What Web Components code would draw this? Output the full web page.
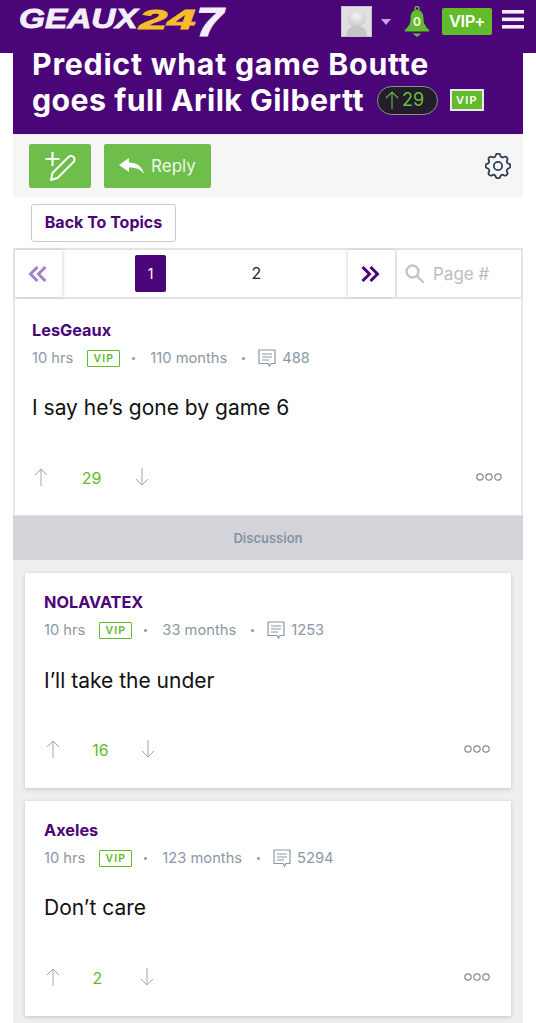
<!DOCTYPE html>
<html><head><meta charset="utf-8">
<style>
html,body{margin:0;padding:0;background:#fff;font-family:Inter,"Liberation Sans",sans-serif;overflow:hidden;height:1023px}
geaux-header{position:relative;z-index:2}
</style></head><body>
<template id="t-header"><style>
:host{display:flex;height:53px;background:#4a0578;box-sizing:border-box;padding:6px 12px 0 19px}
.logo{font:italic 700 28px/1 "Liberation Sans",sans-serif;color:#f3eefa;display:flex;height:32px;-webkit-text-stroke:.9px currentColor;width:206px;flex:none}
.logo span{display:block;transform-origin:0 50%;white-space:nowrap}
.g{width:120px;transform:scaleX(1.19);margin-top:-1px}
.n{width:57px;color:#f5bd2c;transform:scaleX(1.82);margin-top:0}
.s{font-size:41px;transform:scaleX(1.2);margin-top:-4px}
.sp{flex:1}
.r{display:flex;align-items:flex-start}
.tri{width:0;height:0;border:5.500px solid transparent;border-top:6.500px solid #c9a4e2;border-bottom:0;margin:13px 13px 0 9px}
.vip{width:50px;height:27px;background:#62bb2a;border-radius:2px;color:#fff;font:600 16.500px/27px Inter,sans-serif;letter-spacing:-.5px;text-align:center;margin:2px 10px 0 12px}
svg{display:block}
</style>
<div class="logo"><span class="g">GEAUX</span><span class="n">24</span><span class="s">7</span></div><div class="sp"></div>
<div class="r">
<svg width="31" height="31" viewBox="0 0 31 31"><defs><radialGradient id="a" cx=".5" cy=".35" r=".7"><stop offset="0" stop-color="#f4f4f4"/><stop offset="1" stop-color="#c4c4c4"/></radialGradient></defs><rect width="31" height="31" fill="#c9bdd6"/><rect x="1" y="1" width="29" height="29" fill="#e0e0e0"/><circle cx="15.500" cy="12.500" r="9" fill="url(#a)"/><path d="M5 30c0-8 5-10 10.500-10S26 22 26 30z" fill="#c6c6c6"/></svg>
<div class="tri"></div>
<svg width="26" height="32" viewBox="0 0 26 32"><circle cx="13" cy="2.500" r="2" fill="none" stroke="#6dbe30" stroke-width="1.300"/><path d="M13 4c-5 0-6.500 4-6.500 9 0 5-2.500 8-6 11.500 0 .7.500 1 1.200 1h22.600c.7 0 1.200-.3 1.200-1-3.500-3.500-6-6.500-6-11.500 0-5-1.500-9-6.500-9z" fill="#62bb2a"/><path d="M8.500 27.500h9L13 31z" fill="#62bb2a"/><text x="13" y="20" text-anchor="middle" font-family="Inter" font-weight="600" font-size="12" fill="#fff">0</text></svg>
<div class="vip">VIP+</div>
<svg width="22" height="20" viewBox="0 0 22 20" style="margin-top:4px"><rect y="0" width="22" height="3.600" fill="#f6eefb"/><rect y="7.500" width="22" height="3.600" fill="#f6eefb"/><rect y="15" width="22" height="3.600" fill="#f6eefb"/></svg>
</div></template>

<template id="t-title"><style>
:host{display:flow-root;margin:0 13px;height:82px;background:#4a0578;color:#fff;box-sizing:border-box;border-bottom:1px solid #f4e6fb}
.l{font:700 30.300px/36px Inter,sans-serif;letter-spacing:.75px;padding-left:19px;white-space:nowrap;margin-top:-7px}
.row{display:flex;align-items:center;letter-spacing:.45px}
.pill{display:inline-flex;align-items:center;gap:3px;box-sizing:border-box;width:61px;height:29px;border:1.500px solid #7f9e6a;border-radius:15px;background:#231c2d;color:#6dbe30;font:400 18px/1 Inter,sans-serif;letter-spacing:0;margin-left:13px;padding-left:7px}
.v{width:34px;height:22px;box-sizing:border-box;border:2px solid #e8e8e8;background:#62bb2a;color:#fff;font:600 11px/18px Inter,sans-serif;letter-spacing:1.200px;text-align:center;margin-left:12px}
</style>
<div class="l">Predict what game Boutte</div>
<div class="l row" style="margin-top:0"><span>goes full Arilk Gilbertt</span><span class="pill"><svg width="14" height="20" viewBox="0 0 14 20"><path d="M7 19V2M1 8l6-6 6 6" fill="none" stroke="#6dbe30" stroke-width="1.100"/></svg>29</span><span class="v">VIP</span></div>
</template>

<template id="t-toolbar"><style>
:host{display:flex;margin:0 13px;height:62px;background:#f6f6f7;box-sizing:border-box;padding:9px 12px 0 16px}
.b{height:44px;background:#6fbe4b;border-radius:2px;display:flex;align-items:center;justify-content:center;color:#eef8e8;font:400 17px/1 Inter,sans-serif;gap:7px;box-sizing:border-box}
.sp{flex:1}svg{display:block}
</style>
<div class="b" style="width:62px;margin-right:13px"><svg width="34" height="34" viewBox="0 0 34 34" fill="none" stroke="#fff"><path d="M9.500 3v14M2.500 10h14" stroke-width="2.200"/><path d="M8 31l1.500-7L25.500 8c1.500-1.500 3.500-1.500 5 0s1.500 3.500 0 5L14.500 29z" stroke-width="2" stroke-linejoin="round"/></svg></div>
<div class="b" style="width:107px"><svg width="25" height="16" viewBox="0 0 25 16"><path d="M0 7L10 0v4.500c8 0 13 4 15 11.500-3-4.500-8-6.500-15-6.500V14z" fill="#fff"/></svg><span>Reply</span></div>
<div class="sp"></div>
<svg style="margin-top:9px" width="26" height="26" viewBox="2.500 2.500 19 19" fill="none" stroke="#2c3e50" stroke-width="1.300" stroke-linecap="round" stroke-linejoin="round"><circle cx="12" cy="12" r="3"/><path d="M10.300 4.300c.4-1.800 3-1.800 3.400 0a1.700 1.700 0 0 0 2.600 1.100c1.500-.9 3.300.8 2.400 2.400a1.700 1.700 0 0 0 1 2.500c1.800.4 1.800 3 0 3.400a1.700 1.700 0 0 0-1 2.600c.9 1.500-.9 3.300-2.400 2.400a1.700 1.700 0 0 0-2.600 1c-.4 1.800-3 1.800-3.400 0a1.700 1.700 0 0 0-2.600-1c-1.500.9-3.300-.9-2.400-2.400a1.700 1.700 0 0 0-1-2.600c-1.800-.4-1.800-3 0-3.400a1.700 1.700 0 0 0 1-2.500c-.9-1.600.9-3.300 2.400-2.400 1 .6 2.300.1 2.600-1.100z"/></svg>
</template>

<template id="t-back"><style>
:host{display:block;margin:0 13px;height:51px;box-sizing:border-box;padding:7px 0 0 18px}
a{display:block;width:145px;height:38px;box-sizing:border-box;border:1.500px solid #c9ccd3;border-radius:3px;color:#4a0578;font:700 16px/35px Inter,sans-serif;text-align:center}
</style><a>Back To Topics</a></template>

<template id="t-pager"><style>
:host{display:flex;margin:0 13px;height:51px;box-sizing:border-box;border:2px solid #e4e4e4;background:#fff;align-items:stretch}
.c{display:flex;align-items:center;justify-content:center;box-sizing:border-box}
.e{width:47px;box-shadow:1px 0 3px rgba(0,0,0,.15);z-index:1}
.pg{flex:1;position:relative}
.n{position:absolute;top:5px;width:31px;height:37px;text-align:center;font:400 16px/37px Inter,sans-serif;color:#222}
.cur{background:#4a0578;color:#fff;border-radius:2px;font-size:14px}
.s{width:126px;border-left:2px solid #e8e8e8;justify-content:flex-start;padding-left:8px;gap:9px;color:#bdbdbd;font:400 17px/1 Inter,sans-serif}
.s span{margin-top:2px}
</style>
<div class="c e"><svg width="20" height="16" viewBox="0 0 20 16" style="margin-left:-2px"><path d="M9.500 1L2.500 8l7 7M17.500 1l-7 7 7 7" fill="none" stroke="#a182c4" stroke-width="3"/></svg></div>
<div class="pg"><span class="n cur" style="left:73px">1</span><span class="n" style="left:179px">2</span></div>
<div class="c e" style="box-shadow:-1px 0 3px rgba(0,0,0,.15)"><svg width="20" height="16" viewBox="0 0 20 16" style="margin-left:-3px"><path d="M2.500 1l7 7-7 7M10.500 1l7 7-7 7" fill="none" stroke="#4a0578" stroke-width="3"/></svg></div>
<div class="c s"><svg width="19" height="19" viewBox="0 0 19 19" fill="none" stroke="#c4c4c4" stroke-width="2.400"><circle cx="7.500" cy="7.500" r="6"/><path d="M12 12l6 6" stroke-linecap="round"/></svg><span>Page #</span></div>
</template>

<template id="t-post"><style>
:host{display:block;background:#fff;box-sizing:border-box;position:relative}
.u{font:700 16.300px/20px Inter,sans-serif;color:#4a0578}
.m{display:flex;align-items:center;height:20px;margin-top:8px;color:#8b98a5;font:400 14.700px/20px Inter,sans-serif;white-space:nowrap}
.vip{width:33px;height:17px;box-sizing:border-box;border:1px solid #62bb2a;border-radius:1px;color:#62bb2a;font:600 10.500px/15px Inter,sans-serif;letter-spacing:1.200px;text-align:center;margin:0 12px 0 14px}
.d{width:3px;height:3px;border-radius:50%;background:#8b98a5;margin:0 15px}
.d1{margin-right:13px}
.bub{margin-right:6px;display:block}
.t{font:400 21px/26px Inter,sans-serif;color:#111;margin-top:var(--tg,25px)}
.f{position:absolute;left:var(--pl);right:var(--pr);bottom:var(--fb);height:22px;display:grid;grid-template-columns:14px var(--w) 14px 1fr 26px;padding-left:2px;align-items:center;font:400 16px/22px Inter,sans-serif;color:#62bb2a}
.sc{text-align:center;padding-right:var(--sp,0);margin-top:2px}
svg{display:block}
.d0{margin-left:0}
</style>
<div class="u"><slot name="user"></slot></div>
<div class="m"><span><slot name="age"></slot></span><span class="vip">VIP</span><span class="d d0"></span><span><slot name="tenure"></slot></span><span class="d d1"></span>
<svg class="bub" width="18" height="19" viewBox="0 0 18 19" fill="none" stroke="#8b98a5" stroke-width="1.200"><path d="M1 1h16v13.500h-4L11.500 17 10 14.500H1z"/><path d="M4 5h10M4 8h10M4 11h7"/></svg>
<span><slot name="count"></slot></span></div>
<div class="t"><slot name="text"></slot></div>
<div class="f"><svg width="14" height="18" viewBox="0 0 14 18" fill="none" stroke="#a6a6a6" stroke-width="1"><path d="M7 18V1M1 7l6-6 6 6"/></svg><span class="sc"><slot name="score"></slot></span><svg width="14" height="18" viewBox="0 0 14 18" fill="none" stroke="#a6a6a6" stroke-width="1"><path d="M7 0v17M1 11l6 6 6-6"/></svg><span></span>
<svg width="26" height="8" viewBox="0 0 26 8" fill="none" stroke="#8a8a8a" stroke-width="1.200"><circle cx="4" cy="4" r="3.200"/><circle cx="13" cy="4" r="3.200"/><circle cx="22" cy="4" r="3.200"/></svg></div>
</template>

<template id="t-disc"><style>
:host{display:block;margin:0 13px;height:45px;background:#d2d4d9;color:#8492a2;font:600 13px/45px Inter,sans-serif;text-align:center;border-top:1px solid #dfe0e3;box-sizing:border-box}
</style>Discussion</template>

<template id="t-list"><style>
:host{display:flex;flex-direction:column;gap:13px;margin:0 13px;padding:13px 12px 0;background:#eee;height:463px;box-sizing:border-box}
</style><slot></slot></template>

<geaux-header></geaux-header>
<topic-title></topic-title>
<tool-bar></tool-bar>
<back-link></back-link>
<page-bar></page-bar>

<forum-post style="margin:0 13px;height:216px;padding:21px 19px 0 17px;border:solid #e8e8e8;border-width:0 2px;--pl:17px;--pr:19px;--fb:28px;--w:87px;--tg:27px">
<span slot="user">LesGeaux</span><span slot="age">10 hrs</span><span slot="tenure">110 months</span><span slot="count">488</span><span slot="text">I say he’s gone by game 6</span><span slot="score">29</span></forum-post>

<discussion-bar></discussion-bar>
<post-list>
<forum-post style="flex:none;height:215px;padding:19px 19px 0;box-shadow:0 1px 4px rgba(0,0,0,.18);--pl:19px;--pr:21px;--fb:29px;--w:81px;--tg:28px">
<span slot="user">NOLAVATEX</span><span slot="age">10 hrs</span><span slot="tenure">33 months</span><span slot="count">1253</span><span slot="text">I’ll take the under</span><span slot="score">16</span></forum-post>
<forum-post style="flex:none;height:215px;padding:19px 19px 0;box-shadow:0 1px 4px rgba(0,0,0,.18);--pl:19px;--pr:21px;--fb:29px;--w:80px;--sp:5px;--tg:27px">
<span slot="user">Axeles</span><span slot="age">10 hrs</span><span slot="tenure">123 months</span><span slot="count">5294</span><span slot="text">Don’t care</span><span slot="score">2</span></forum-post>
</post-list>

<script>
const mk=(n,id)=>customElements.define(n,class extends HTMLElement{constructor(){super();const s=this.attachShadow({mode:'open'});s.appendChild(document.getElementById(id).content.cloneNode(true));}});
mk('geaux-header','t-header');mk('topic-title','t-title');mk('tool-bar','t-toolbar');mk('back-link','t-back');mk('page-bar','t-pager');
mk('discussion-bar','t-disc');mk('post-list','t-list');mk('forum-post','t-post');
</script>
</body></html>
